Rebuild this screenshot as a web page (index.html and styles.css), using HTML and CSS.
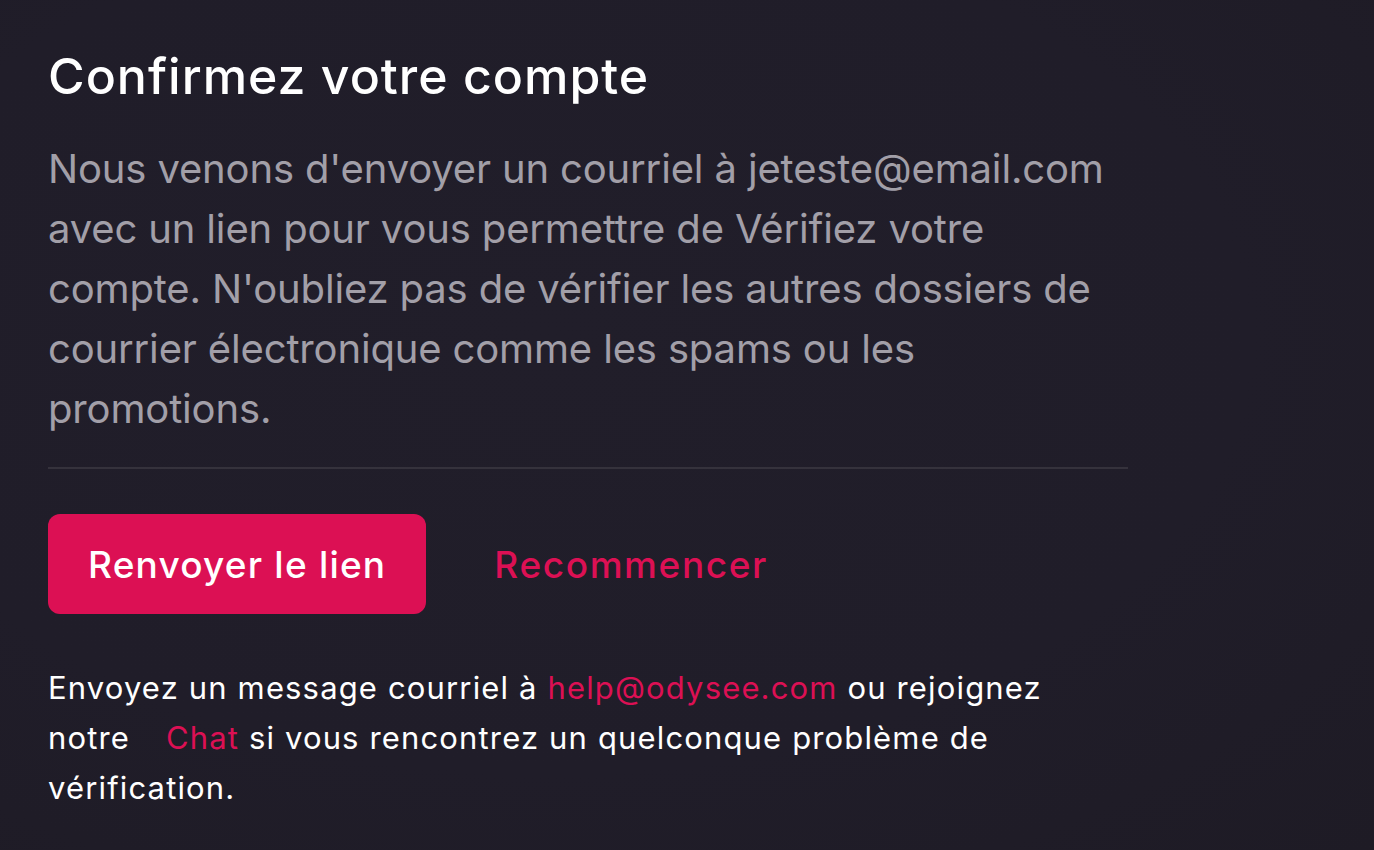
FILE: index.html
```html
<!DOCTYPE html>
<html lang="fr">
<head>
<meta charset="utf-8">
<title>Confirmez votre compte</title>
<link rel="stylesheet" href="styles.css">
</head>
<body>
<main class="card">
  <h1 class="title">Confirmez votre compte</h1>
  <p class="lead">Nous venons d'envoyer un courriel à jeteste@email.com avec un lien pour vous permettre de Vérifiez votre compte. N'oubliez pas de vérifier les autres dossiers de courrier électronique comme les spams ou les promotions.</p>
  <hr class="divider">
  <div class="actions">
    <button class="btn-primary" type="button">Renvoyer le lien</button>
    <button class="btn-link" type="button">Recommencer</button>
  </div>
  <p class="help">Envoyez un message courriel à <a class="link" href="#">help@odysee.com</a> ou rejoignez notre <a class="link chat" href="#">Chat</a> si vous rencontrez un quelconque problème de vérification.</p>
</main>
</body>
</html>
```

FILE: styles.css
```css
html, body {
  margin: 0;
  height: 100%;
}
body {
  background: radial-gradient(ellipse at 40% 40%, #211e2a 0%, #201d29 60%, #1e1b25 100%);
  font-family: Inter, "Noto Sans", sans-serif;
  color: #ffffff;
  overflow: hidden;
}
.card {
  width: 1080px;
  padding: 44px 0 0 48px;
}
.title {
  margin: 0;
  font-size: 50px;
  font-weight: 500;
  line-height: 64px;
  letter-spacing: 1px;
}
.lead {
  margin: 31px 0 0;
  font-size: 40px;
  line-height: 60px;
  letter-spacing: -0.15px;
  color: #a29fa8;
}
.divider {
  border: 0;
  height: 2px;
  background: #35323c;
  margin: 28px 0 0;
}
.actions {
  display: flex;
  align-items: center;
  gap: 68px;
  margin-top: 45px;
}
.btn-primary {
  background: #dc1054;
  color: #ffffff;
  border: 0;
  border-radius: 12px;
  height: 100px;
  padding: 0 40px;
  font: 500 37px Inter, sans-serif;
  letter-spacing: 1.2px;
}
.btn-link {
  background: none;
  border: 0;
  padding: 0;
  color: #dc1054;
  font: 500 37px Inter, sans-serif;
  letter-spacing: 1.6px;
}
.help {
  margin: 49px 0 0;
  font-size: 31px;
  line-height: 50px;
  letter-spacing: 1.15px;
  color: #ffffff;
}
.link {
  color: #dc1054;
  text-decoration: none;
}
.chat {
  margin-left: 26px;
}
```
